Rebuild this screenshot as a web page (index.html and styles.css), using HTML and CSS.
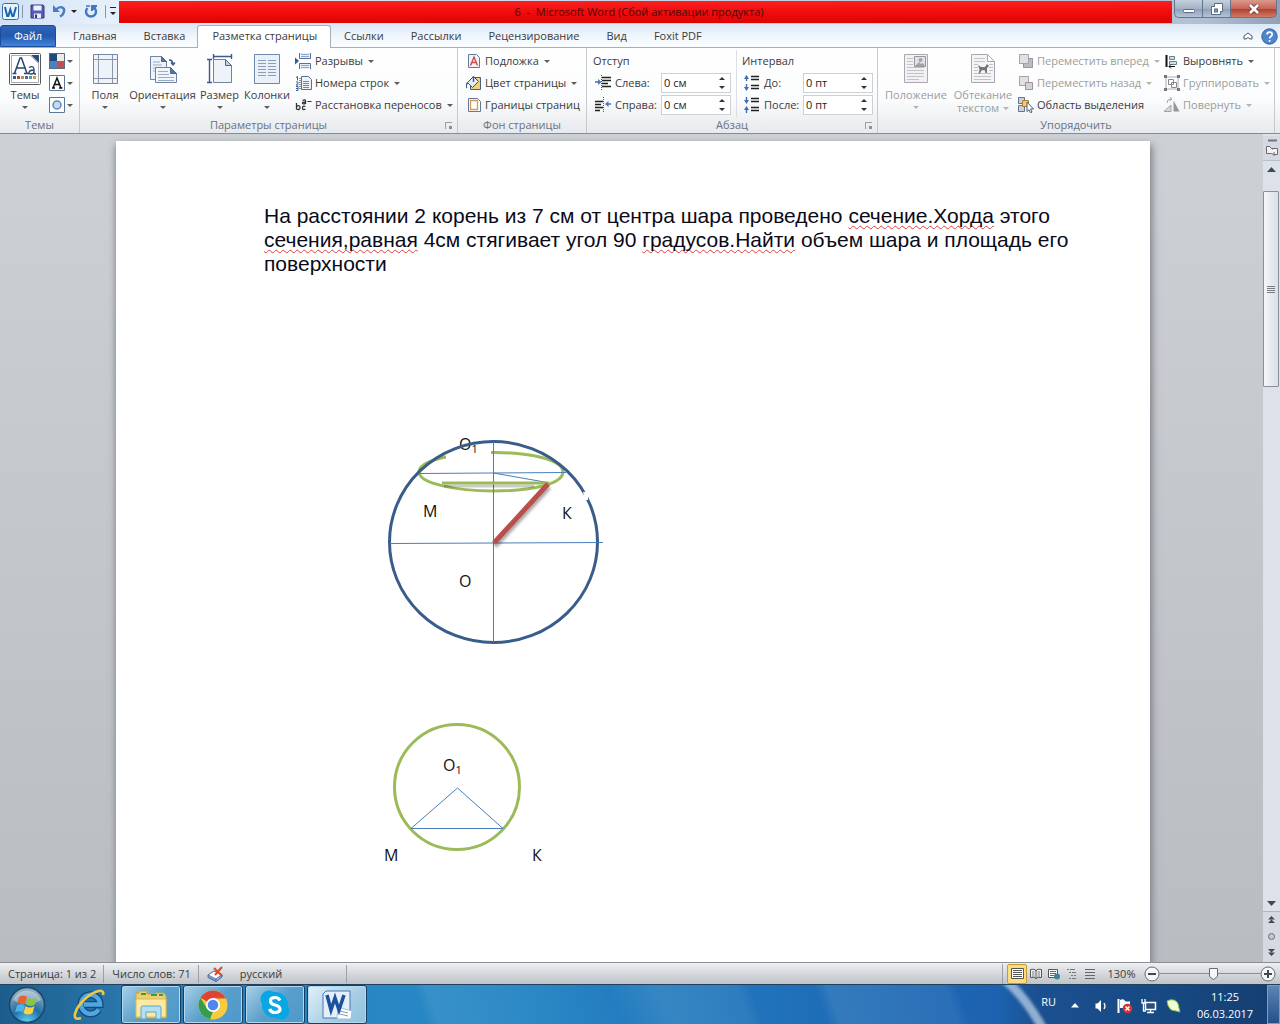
FILE: index.html
```html
<!DOCTYPE html>
<html lang="ru">
<head>
<meta charset="utf-8">
<title>6 - Microsoft Word</title>
<link rel="stylesheet" href="styles.css">
</head>
<body>
<header class="titlebar">
  <div class="quick">
    <svg class="word-mark" width="17" height="17" viewBox="0 0 17 17"><rect x=".5" y=".5" width="16" height="16" rx="2" fill="#e9f3fc" stroke="#3c6ca8"/><path d="M3 4l2.200 9h1.200L8.300 6.500 10.300 13h1.200L14 4" fill="none" stroke="#1f66a8" stroke-width="2"/></svg>
    <span class="sep"></span>
    <button class="plain" aria-label="Сохранить"><svg width="15" height="15" viewBox="0 0 15 15"><path d="M1 1h12l1 1v12H1z" fill="#5a5cb8" stroke="#34347c"/><path d="M3.500 1.500h8v5h-8z" fill="#eef2fb"/><path d="M4 9.500h7v4.500H4z" fill="#e8ecf6"/><path d="M5 10.500h2v3.500H5z" fill="#34347c"/></svg></button>
    <button class="plain undo" aria-label="Отменить"><svg width="14" height="14" viewBox="0 0 14 14"><path d="M3 5.500C7 1.500 12 3 11 7.500 10.500 10 9 11.500 7 12.500" fill="none" stroke="#4a7cc4" stroke-width="2.400"/><path d="M0 1v7h7z" fill="#4a7cc4"/></svg><i class="caret dark"></i></button>
    <button class="plain redo" aria-label="Повторить"><svg width="14" height="14" viewBox="0 0 14 14"><path d="M3.500 4A5 5 0 1 0 10.500 4" fill="none" stroke="#3f78c4" stroke-width="2.400"/><path d="M7 1h6v1.500L8.500 7H7z" fill="#3f78c4"/><path d="M2 2h4" stroke="#3f78c4" stroke-width="1.500"/></svg></button>
    <span class="sep"></span>
    <button class="plain more" aria-label="Настройка панели"><i class="caret dark"></i></button>
  </div>
  <h1 class="title">6&nbsp; -&nbsp; Microsoft Word (Сбой активации продукта)</h1>
  <div class="winbtns">
    <button class="wb" aria-label="Свернуть"><svg width="12" height="12" viewBox="0 0 12 12"><rect x=".5" y="6.500" width="11" height="3" rx="1" fill="#fff" stroke="#5b6a7c"/></svg></button>
    <button class="wb" aria-label="Восстановить"><svg width="12" height="12" viewBox="0 0 12 12"><path d="M3.500.5h8v8h-2v3h-9v-8h3z" fill="#fff" stroke="#5b6a7c"/><rect x="3.500" y="6" width="3" height="3" fill="#8b9cb4" stroke="#5b6a7c"/></svg></button>
    <button class="wb close" aria-label="Закрыть"><svg width="12" height="12" viewBox="0 0 12 12"><path d="M2 2l8 8M10 2l-8 8" stroke="#6b3a3a" stroke-width="4.400"/><path d="M2 2l8 8M10 2l-8 8" stroke="#fff" stroke-width="2.600"/></svg></button>
  </div>
</header>

<nav class="tabs">
  <button class="file">Файл</button>
  <button class="tab">Главная</button>
  <button class="tab">Вставка</button>
  <button class="tab active">Разметка страницы</button>
  <button class="tab">Ссылки</button>
  <button class="tab">Рассылки</button>
  <button class="tab">Рецензирование</button>
  <button class="tab">Вид</button>
  <button class="tab">Foxit PDF</button>
  <div class="tab-end">
    <button class="plain" aria-label="Свернуть ленту"><svg width="10" height="8" viewBox="0 0 10 8"><path d="M1 4l4-3 4 3v3H7L5 5.500 3 7H1z" fill="#fff" stroke="#4a5568"/></svg></button>
    <button class="plain" aria-label="Справка"><svg width="17" height="17" viewBox="0 0 17 17"><circle cx="8.500" cy="8.500" r="7.700" fill="#4d86cf" stroke="#2f5f9f"/><path d="M6 6.500c0-3.300 5.200-3.300 5.200 0 0 1.800-2.600 1.700-2.600 4M8.600 12v1.700" fill="none" stroke="#fff" stroke-width="1.700"/></svg></button>
  </div>
</nav>

<section class="ribbon">
  <div class="group g-themes">
    <div class="tools">
      <button class="big"><svg width="32" height="32" viewBox="0 0 32 32"><rect x=".5" y=".5" width="31" height="31" rx="1" fill="#fff" stroke="#55595e"/><path d="M2.500 2.500h19l8 8v19h-27z" fill="#fff" stroke="#a9adb2"/><path d="M22 2h8v8z" fill="#2b4a7c"/><path d="M5.500 20.500L11 5h1.500L18 20.500M8 15h8M3.500 20.500h4M15 20.500h5" fill="none" stroke="#27456f" stroke-width="1.500"/><path d="M20 14.500c4-2 5 0 5 2v4.500M25 17c-6 0-6 4-3 4 2 0 3-1.500 3-2.500M25 21h2" fill="none" stroke="#27456f" stroke-width="1.300"/><path d="M4 23h3v3H4z" fill="#3d5b8c"/><path d="M8 23h3v3H8z" fill="#b0483f"/><path d="M12 23h3v3h-3z" fill="#94a84e"/><path d="M16 23h3v3h-3z" fill="#6e5b92"/><path d="M20 23h3v3h-3z" fill="#4b9bb0"/><path d="M24 23h3v3h-3z" fill="#dd9348"/></svg><span>Темы</span><i class="caret"></i></button>
      <div class="rows minis">
        <button class="row" aria-label="Цвета"><svg width="16" height="16" viewBox="0 0 16 16"><path d="M0 0h8v8H0z" fill="#1f497d"/><path d="M8 0h8v8H8z" fill="#eeece1"/><path d="M0 8h8v8H0z" fill="#4f81bd"/><path d="M8 8h8v8H8z" fill="#c0504d"/><path d="M.5.5h15v15H.5z" fill="none" stroke="#5a6b82"/></svg><i class="caret"></i></button>
        <button class="row" aria-label="Шрифты"><svg width="16" height="16" viewBox="0 0 16 16"><path d="M.5.5h15v15H.5z" fill="#fff" stroke="#5f7896"/><path d="M4 13L8 3l4 10M5.500 9.500h5M3 13h3M10 13h3.500" fill="none" stroke="#111" stroke-width="1.500"/></svg><i class="caret"></i></button>
        <button class="row" aria-label="Эффекты"><svg width="16" height="16" viewBox="0 0 16 16"><path d="M.5.5h15v15H.5z" fill="#fff" stroke="#5f7896"/><circle cx="8" cy="8" r="4" fill="#c2daf4" stroke="#5a86bb" stroke-width="1.500"/></svg><i class="caret"></i></button>
      </div>
    </div>
    <h2>Темы</h2>
  </div>

  <div class="group g-setup">
    <div class="tools">
      <button class="big"><svg width="32" height="32" viewBox="0 0 32 32"><path d="M4.500 1.500h24v29h-24z" fill="#eef3fa" stroke="#7088aa"/><path d="M9.500 2v28M23.500 2v28M5 6.500h23M5 25.500h23" stroke="#8a96a8"/></svg><span>Поля</span><i class="caret"></i></button>
      <button class="big"><svg width="32" height="32" viewBox="0 0 32 32"><path d="M3.500 3.500h11l5 5v18h-16z" fill="#eef3fa" stroke="#6f83a2"/><path d="M14.500 3.500v5h5z" fill="#56759f" stroke="#4d668c"/><path d="M6 9h7M6 12h9M6 15h9M6 18h9" stroke="#9aabc3"/><path d="M8.500 14.500h15l6 6v9h-21z" fill="#f1f5fb" stroke="#6f83a2"/><path d="M23.500 14.500v6h6z" fill="#56759f" stroke="#4d668c"/><path d="M11 18.500h10M11 21.500h11M11 24.500h16M11 27.500h16" stroke="#9aabc3"/><path d="M22 7c3 0 4 1.500 4 4.500M24 9.500l2 2.500 2-2.500" fill="none" stroke="#3c5a86" stroke-width="1.300"/></svg><span>Ориентация</span><i class="caret"></i></button>
      <button class="big"><svg width="32" height="32" viewBox="0 0 32 32"><path d="M9.500 6.500h12l6 6v17h-18z" fill="#eef3fa" stroke="#6f83a2"/><path d="M21.500 6.500v6h6z" fill="#c2d1e5" stroke="#4d668c"/><path d="M9 3.500h19M9.500 1v5M27.500 1v5M5.500 6v24M3 6.500h5M3 29.500h5" stroke="#3b5a8f" stroke-width="1.400"/></svg><span>Размер</span><i class="caret"></i></button>
      <button class="big"><svg width="32" height="32" viewBox="0 0 32 32"><path d="M3.500 1.500h25v29h-25z" fill="#e9f0f9" stroke="#7088aa"/><path d="M7 7.500h8M7 10.500h8M7 13.500h8M7 16.500h8M7 19.500h8M7 22.500h8M17 7.500h8M17 10.500h8M17 13.500h8M17 16.500h8M17 19.500h8M17 22.500h8" stroke="#8c9fba"/></svg><span>Колонки</span><i class="caret"></i></button>
      <div class="rows">
        <button class="row"><svg width="17" height="16" viewBox="0 0 17 16"><path d="M4.500 0v5.500h11V0M4.500 16v-5.500h11V16" fill="#e9f0f9" stroke="#55719b"/><path d="M6 1.500h8M6 3.500h8M6 12.500h8M6 14.500h8" stroke="#8da6c8"/><path d="M0 4.500v7L4 8z" fill="#2d5b9b"/></svg><span>Разрывы</span><i class="caret"></i></button>
        <button class="row"><svg width="17" height="16" viewBox="0 0 17 16"><path d="M1 2.500l1.500-1v4M1 7h2v1.500L1 10h2.500M1 11.500h2v4H1M1 13.500h2" fill="none" stroke="#3b6299"/><path d="M6.500 1.500h7l3 3v10h-10z" fill="#eef3fa" stroke="#55719b"/><path d="M8 6.500h6M8 8.500h6M8 10.500h6M8 12.500h6" stroke="#6f87ab"/><path d="M5 3v11" stroke="#222" stroke-dasharray="1 1"/></svg><span>Номера строк</span><i class="caret"></i></button>
        <button class="row"><svg width="17" height="16" viewBox="0 0 17 16"><path d="M1.500 6v6.500M1.500 9.500q3.500-2 3.500 1t-3.500 1.500M10.500 9.500q-3-1-3 1.500t3 1M7.500 3.500q3-1.500 3 .5v3M10.500 5q-3.500 0-3 1.300t3 0" fill="none" stroke="#333" stroke-width="1.300"/><path d="M12.500 4.500h4" stroke="#333"/></svg><span>Расстановка переносов</span><i class="caret"></i></button>
      </div>
    </div>
    <h2>Параметры страницы</h2>
    <button class="launch" aria-label="Параметры страницы: подробно"></button>
  </div>

  <div class="group g-back">
    <div class="tools">
      <div class="rows">
        <button class="row"><svg width="16" height="16" viewBox="0 0 16 16"><path d="M2.500 1.500h8l3 3v10h-11z" fill="#eef3fa" stroke="#64789a"/><path d="M4.500 12.500L8 4l3.500 8.500M6 9.500h4" fill="none" stroke="#d04a4a" stroke-width="1.400"/></svg><span>Подложка</span><i class="caret"></i></button>
        <button class="row"><svg width="16" height="16" viewBox="0 0 16 16"><path d="M7.500 2.500h7v12h-10v-4" fill="#ecd07c" stroke="#4a5f80"/><path d="M1.500 7.500l6-6 5 5-6 6z" fill="#e3eaf4" stroke="#3b4f70"/><path d="M7.500 1v6M2 8C0 8 0 12 .8 13" fill="none" stroke="#3b5f96" stroke-width="1.400"/></svg><span>Цвет страницы</span><i class="caret"></i></button>
        <button class="row"><svg width="16" height="16" viewBox="0 0 16 16"><path d="M2.500 1.500h9l3 3v10h-12z" fill="#fff" stroke="#64789a"/><path d="M4.500 3.500h7v9h-7z" fill="#fff" stroke="#d79a5a" stroke-width="1.300"/></svg><span>Границы страниц</span></button>
      </div>
    </div>
    <h2>Фон страницы</h2>
  </div>

  <div class="group g-para">
    <div class="tools">
      <div class="fields indent">
        <h3>Отступ</h3>
        <label for="left"><svg width="16" height="16" viewBox="0 0 16 16"><path d="M7 2.500h9M7 5.500h9M7 8.500h6M7 11.500h9" stroke="#222" stroke-width="1.600"/><path d="M0 7h5" stroke="#4a7ab8" stroke-width="1.600"/><path d="M3 4l3.500 3L3 10z" fill="#4a7ab8"/><path d="M6.500 0v16" stroke="#555" stroke-dasharray="1 1"/></svg>Слева:</label>
        <div class="spin"><input id="left" value="0 см"><i></i></div>
        <label for="right"><svg width="16" height="16" viewBox="0 0 16 16"><path d="M0 4.500h8M0 7.500h6M0 10.500h8M0 13.500h5" stroke="#222" stroke-width="1.600"/><path d="M12 7h4" stroke="#4a7ab8" stroke-width="1.600"/><path d="M13.500 4L10 7l3.500 3z" fill="#4a7ab8"/><path d="M8.500 0v16" stroke="#555" stroke-dasharray="1 1"/></svg>Справа:</label>
        <div class="spin"><input id="right" value="0 см"><i></i></div>
      </div>
      <div class="fields spacing">
        <h3>Интервал</h3>
        <label for="before"><svg width="16" height="16" viewBox="0 0 16 16"><path d="M7 1.500h8M7 4.500h8M7 10.500h8M7 13.500h8" stroke="#222" stroke-width="1.400"/><path d="M2.500 1v5M2.500 9v5" stroke="#3f6fae" stroke-width="1.400"/><path d="M0 4l2.500-4L5 4zM0 12h5l-2.500 4z" fill="#3f6fae"/></svg>До:</label>
        <div class="spin"><input id="before" value="0 пт"><i></i></div>
        <label for="after"><svg width="16" height="16" viewBox="0 0 16 16"><path d="M7 1.500h8M7 4.500h8M7 10.500h8M7 13.500h8" stroke="#222" stroke-width="1.400"/><path d="M2.500 0v5M2.500 11v5" stroke="#3f6fae" stroke-width="1.400"/><path d="M0 3h5L2.500 7zM0 13l2.500-4L5 13z" fill="#3f6fae"/></svg>После:</label>
        <div class="spin"><input id="after" value="0 пт"><i></i></div>
      </div>
    </div>
    <h2>Абзац</h2>
    <button class="launch" aria-label="Абзац: подробно"></button>
  </div>

  <div class="group g-arrange">
    <div class="tools">
      <button class="big" disabled><svg width="32" height="32" viewBox="0 0 32 32"><path d="M4.500 1.500h23v28h-23z" fill="#f1f0f3" stroke="#aaa8ae"/><path d="M7 5.500h6M7 8.500h6M7 11.500h6M7 14.500h17M7 17.500h17M7 20.500h17M7 23.500h17M7 26.500h12" stroke="#c4c2c8"/><path d="M14.500 3.500h11v10h-11z" fill="#e3e2e6" stroke="#98969c"/><circle cx="20.500" cy="7" r="2" fill="#a5a3a9"/><path d="M15 13l4-4 2 2 2-1 2 3z" fill="#a5a3a9"/></svg><span>Положение</span><i class="caret"></i></button>
      <button class="big" disabled><svg width="32" height="32" viewBox="0 0 32 32"><path d="M4.500 1.500h16l7 7v21h-23z" fill="#f4f3f5" stroke="#aaa8ae"/><path d="M20.500 1.500v7h7z" fill="#fff" stroke="#aaa8ae"/><path d="M7 5.500h11M7 8.500h11M7 11.500h4M22 11.500h4M7 14.500h4M22 14.500h4M7 17.500h4M22 17.500h4M7 20.500h17M7 23.500h17M7 26.500h17" stroke="#c4c2c8"/><path d="M11 12l3 2h4l2-3 2 2-2 2v5h-1.500l-1-3-3 .5-1.500 3h-1.500l1-4z" fill="#77757b"/></svg><span>Обтекание<br>текстом <i class="caret"></i></span></button>
      <div class="rows order">
        <button class="row" disabled><svg width="16" height="16" viewBox="0 0 16 16"><path d="M5.500 5.500h9v9h-9z" fill="#bdbbc1" stroke="#97959b"/><path d="M1.500 1.500h9v9h-9z" fill="#e1e0e4" stroke="#a5a3a9"/></svg><span>Переместить вперед</span><i class="caret"></i></button>
        <button class="row" disabled><svg width="16" height="16" viewBox="0 0 16 16"><path d="M1.500 1.500h9v9h-9z" fill="#e1e0e4" stroke="#a5a3a9"/><path d="M7.500 7.500h7v7h-7z" fill="#d3d2d7" stroke="#97959b"/></svg><span>Переместить назад</span><i class="caret"></i></button>
        <button class="row"><svg width="16" height="16" viewBox="0 0 16 16"><path d="M.5.5h6v6h-6zM.5 8.500h6v6h-6z" fill="#c8d2e0" stroke="#66758c"/><path d="M4.500 3.500h6v6h-6z" fill="#f0c878" stroke="#a98135"/><path d="M9 5l6.500 7h-3l1.500 3-1.500.8-1.500-3L9 14.500z" fill="#fff" stroke="#4a5f80"/></svg><span>Область выделения</span></button>
      </div>
      <div class="rows">
        <button class="row"><svg width="16" height="16" viewBox="0 0 16 16"><path d="M2.500 2v12" stroke="#111" stroke-width="2"/><path d="M5.500 3.500h5v3h-5zM5.500 8.500h7v3h-7z" fill="#cfe0e6" stroke="#63848e"/><path d="M5 13.500h6M7 11.500l-2 2 2 2" fill="none" stroke="#111"/></svg><span>Выровнять</span><i class="caret"></i></button>
        <button class="row" disabled><svg width="16" height="16" viewBox="0 0 16 16"><path d="M2 2h12v12H2z" fill="none" stroke="#b0aeb4"/><path d="M4.500 4.500h5v5h-5zM7.500 7.500h5v5h-5z" fill="none" stroke="#8a888e"/><path d="M0 0h3v3H0zM13 0h3v3h-3zM0 13h3v3H0zM13 13h3v3h-3z" fill="#77757b"/></svg><span>Группировать</span><i class="caret"></i></button>
        <button class="row" disabled><svg width="16" height="16" viewBox="0 0 16 16"><path d="M0 14.500L7 8v6.500z" fill="#d8d7db" stroke="#a5a3a9"/><path d="M9.500 3.500v11h6z" fill="#98969c"/><path d="M3 6q0-4 4-4M5.500 0L8 2 5.500 4" fill="none" stroke="#a5a3a9"/></svg><span>Повернуть</span><i class="caret"></i></button>
      </div>
    </div>
    <h2>Упорядочить</h2>
  </div>
</section>

<div class="work">
  <main class="desk">
    <article class="page">
      <p>На расстоянии 2 корень из 7 см от центра шара проведено <u>сечение.Хорда</u> этого<br><u>сечения,равная</u> 4см стягивает угол 90 <u>градусов.Найти</u> объем шара и площадь его<br>поверхности</p>
      <svg class="sphere" width="240" height="230" viewBox="380 425 240 230">
        <defs><filter id="soft" x="-20%" y="-50%" width="140%" height="240%"><feDropShadow dx="1" dy="3" stdDeviation="1.500" flood-color="#000" flood-opacity=".35"/></filter></defs>
        <text x="459" y="450">О<tspan class="sub" dy="3">1</tspan></text>
        <text x="423" y="517">М</text>
        <text x="562" y="519">К</text>
        <text x="459" y="587">О</text>
        <path d="M491 452.500C530 452 563 460 563 472c0 12-32 19-70 19s-74-8-74-19c0-6 10-12 27-15" fill="none" stroke="#9bbb59" stroke-width="3"/>
        <ellipse cx="493.500" cy="542" rx="104" ry="100.500" fill="none" stroke="#385d8a" stroke-width="3"/>
        <path d="M583 492h5v8h-3z" fill="#fff"/>
        <path d="M493.500 442v200M390 543.500l213-1M419 473.500l147-1M493.500 473l54 9.500" stroke="#4a7ebb" fill="none"/>
        <path d="M444 486h90" stroke="#000" stroke-opacity=".2" stroke-width="3"/>
        <path d="M442 483h107" stroke="#9bbb59" stroke-width="3"/>
        <path d="M494 543l54-59" stroke="#b9504d" stroke-width="5" filter="url(#soft)"/>
      </svg>
      <svg class="section" width="170" height="150" viewBox="380 720 170 150">
        <circle cx="457" cy="787" r="62.500" fill="none" stroke="#9bbb59" stroke-width="3"/>
        <path d="M457.500 788L411 828.500h92z" fill="none" stroke="#4a7ebb"/>
        <text x="443" y="771">О<tspan class="sub" dy="3">1</tspan></text>
        <text x="384" y="861">М</text>
        <text x="532" y="861">К</text>
      </svg>
    </article>
  </main>
  <aside class="scroll">
    <button class="ruler" aria-label="Линейка"><svg width="14" height="20" viewBox="0 0 14 20"><path d="M3 2.500h9" stroke="#70757f" stroke-width="2"/><path d="M1.500 8.500h3l2 2h6v6h-4l-2-1h-5z" fill="#f4f3f3" stroke="#6c6a70"/><path d="M4 8l4 4M9 14v4" stroke="#6c6a70" stroke-dasharray="2 1"/></svg></button>
    <button class="arrow" aria-label="Вверх"><svg width="9" height="5" viewBox="0 0 9 5"><path d="M0 5l4.500-5L9 5z" fill="#44484f"/></svg></button>
    <div class="track"><div class="thumb"></div></div>
    <button class="arrow" aria-label="Вниз"><svg width="9" height="5" viewBox="0 0 9 5"><path d="M0 0h9L4.500 5z" fill="#44484f"/></svg></button>
    <div class="browse">
      <button class="plain" aria-label="Предыдущая страница"><svg width="7" height="7" viewBox="0 0 7 7"><path d="M0 3.500L3.500 0 7 3.500zM0 7l3.500-3.500L7 7z" fill="#44484f"/></svg></button>
      <button class="plain" aria-label="Объект перехода"><svg width="7" height="7" viewBox="0 0 7 7"><circle cx="3.500" cy="3.500" r="3" fill="#c4c8ce" stroke="#666b73"/></svg></button>
      <button class="plain" aria-label="Следующая страница"><svg width="7" height="7" viewBox="0 0 7 7"><path d="M0 0h7L3.500 3.500zM0 3.500h7L3.500 7z" fill="#44484f"/></svg></button>
    </div>
  </aside>
</div>

<footer class="status">
  <span class="cell">Страница: 1 из 2</span>
  <span class="cell">Число слов: 71</span>
  <span class="cell lang"><svg width="17" height="16" viewBox="0 0 17 16"><path d="M1 9l6-4 8 3.500-6 4.500z" fill="#fff" stroke="#4868a8"/><path d="M1 9v2.500l8 4V13M9 15.500l6-4.500V8.500" fill="#7d9cd6" stroke="#4868a8"/><path d="M7 2l8 8M15 1L8 9" stroke="#dc4a2c" stroke-width="2"/></svg>русский</span>
  <div class="views">
    <button class="view on" aria-label="Разметка страницы"><svg width="13" height="13" viewBox="0 0 13 13"><path d="M.5 1.500h12v10H.5z" fill="#fff" stroke="#555"/><path d="M2 3.500h9M2 5.500h9M2 7.500h9M2 9.500h9" stroke="#555"/></svg></button>
    <button class="view" aria-label="Режим чтения"><svg width="12" height="12" viewBox="0 0 12 12"><path d="M.5 1.500q4-1 5.500 1 1.500-2 5.500-1v8q-4-1-5.500 1-1.500-2-5.500-1zM6 2v9" fill="#f3f3f3" stroke="#555"/><path d="M2 4h2.500M2 6h2.500M2 8h2.500M7.500 4H10M7.500 6H10M7.500 8H10" stroke="#777"/></svg></button>
    <button class="view" aria-label="Веб-документ"><svg width="12" height="12" viewBox="0 0 12 12"><path d="M.5 1.500h9v8h-9z" fill="#fff" stroke="#555"/><path d="M2 3.500h6M2 5.500h6M2 7.500h4" stroke="#666"/><circle cx="9" cy="8.500" r="3" fill="#39849a"/></svg></button>
    <button class="view" aria-label="Структура"><svg width="12" height="12" viewBox="0 0 12 12"><path d="M1 1.500h8M3 4.500h7M5 7.500h5M3 10.500h7" stroke="#777" stroke-dasharray="2 1 6 0"/></svg></button>
    <button class="view" aria-label="Черновик"><svg width="12" height="12" viewBox="0 0 12 12"><path d="M1 1.500h10M1 4.500h10M1 7.500h10M1 10.500h10" stroke="#666"/></svg></button>
  </div>
  <label class="percent" for="zoom">130%</label>
  <button class="plain" aria-label="Уменьшить"><svg width="16" height="16" viewBox="0 0 16 16"><circle cx="8" cy="8" r="7" fill="#f5f6f7" stroke="#66696e"/><path d="M4 8h8" stroke="#44474c" stroke-width="2"/></svg></button>
  <input class="zoom" id="zoom" type="range" min="0" max="100" value="54">
  <button class="plain" aria-label="Увеличить"><svg width="16" height="16" viewBox="0 0 16 16"><circle cx="8" cy="8" r="7" fill="#f5f6f7" stroke="#66696e"/><path d="M4 8h8M8 4v8" stroke="#44474c" stroke-width="2"/></svg></button>
</footer>

<div class="taskbar">
  <button class="plain start" aria-label="Пуск"><svg width="38" height="38" viewBox="0 0 38 38"><defs><radialGradient id="orb" cx=".5" cy="1" r=".9"><stop offset="0" stop-color="#5fd6f5"/><stop offset=".5" stop-color="#1e6fa8"/><stop offset="1" stop-color="#8fa9bd"/></radialGradient></defs><circle cx="19" cy="19" r="17.500" fill="url(#orb)" stroke="#1d466b" stroke-width="1.500"/><path d="M5 14a15 15 0 0 1 28 0q-14 8-28 0z" fill="#fff" opacity=".35"/><path d="M11 11q4-3 8 0l-2 7q-4-2.500-8 0z" fill="#e8622c"/><path d="M20 11.500q4 3 9 0l-2 7q-4.500 3-9 0z" fill="#8cc63f"/><path d="M9 19.500q4-3 8 0l-2 7q-4-2.500-8 0z" fill="#4fb3ea"/><path d="M17.500 20q4.500 3 9 0l-2 7q-4.500 3-9 0z" fill="#fbd042"/></svg></button>
  <button class="plain ie" aria-label="Internet Explorer"><svg width="34" height="34" viewBox="0 0 34 34"><path d="M26.500 21.500a9.500 9.500 0 1 1 1.500-5H12" fill="none" stroke="#14477c" stroke-width="7"/><path d="M26.500 21.500a9.500 9.500 0 1 1 1.500-5H12" fill="none" stroke="#4fa6e0" stroke-width="4.500"/><path d="M9 30C-2 34 3 20 13 11S33 0 31 7" fill="none" stroke="#efc83e" stroke-width="2.600"/></svg></button>
  <button class="app" aria-label="Проводник"><svg width="34" height="32" viewBox="0 0 34 32"><path d="M2 8V4h3V2h8v3h8V4h9l2 3v22H2z" fill="#ecd06e" stroke="#c6a23f"/><path d="M7 5h5M17 6h6M25 6h4" stroke="#3c9a4c" stroke-width="2"/><path d="M2 10h30v18H2z" fill="#fbeaa0" stroke="#d9bb5d"/><path d="M7 30V19q0-2 2-2h16q2 0 2 2v11h-5v-7H12v7z" fill="#b5e0f4" stroke="#5ba5cb"/></svg></button>
  <button class="app" aria-label="Google Chrome"><svg width="30" height="30" viewBox="0 0 30 30"><circle cx="15" cy="15" r="14.500" fill="#f7cb3d"/><path d="M15 15L2.500 7.700A14.500 14.500 0 0 1 27.500 7.700H15z" fill="#dc4437"/><path d="M2.500 7.700L9 18.500l6 3-3 7.700A14.500 14.500 0 0 1 2.500 7.700z" fill="#30a04f"/><path d="M15 8h12.700" stroke="#dc4437"/><circle cx="15" cy="15" r="7" fill="#fff"/><circle cx="15" cy="15" r="5.300" fill="#4c86ee"/></svg></button>
  <button class="app" aria-label="Skype"><svg width="30" height="30" viewBox="0 0 30 30"><circle cx="9" cy="9" r="8.500" fill="#08a7e4"/><circle cx="21" cy="21" r="8.500" fill="#08a7e4"/><circle cx="15" cy="15" r="13" fill="#08a7e4"/><path d="M20 10.500q-1.500-3-5-3-4.500 0-4.500 3.500 0 3 4.500 4t5 4-5 3.500q-4 0-5.500-3.500" fill="none" stroke="#fff" stroke-width="3.200"/></svg></button>
  <button class="app current" aria-label="Microsoft Word"><svg width="30" height="30" viewBox="0 0 30 30"><path d="M4 1h24v27H1V4z" fill="#e4effa" stroke="#4579b8"/><path d="M16 17l14 4-1 8H15z" fill="#fff" stroke="#a9bdd4"/><path d="M18 21l8 2M18 24l8 2" stroke="#7d9bc0"/><path d="M5 5l4 15 4-12 4 12 5-15" fill="none" stroke="#1e50a0" stroke-width="3.500"/></svg></button>
  <div class="tray">
    <span class="ru">RU</span>
    <button class="plain" aria-label="Показать скрытые значки"><svg width="16" height="16" viewBox="0 0 16 16"><path d="M4 10.500L8 6l4 4.500z" fill="#fff"/></svg></button>
    <button class="plain" aria-label="Громкость"><svg width="16" height="16" viewBox="0 0 16 16"><path d="M2.500 5.500h2L8 2v12l-3.500-3.500h-2z" fill="#fff"/><path d="M11 5q2 3 0 6" fill="none" stroke="#fff" stroke-width="1.300"/></svg></button>
    <button class="plain" aria-label="Центр поддержки"><svg width="16" height="16" viewBox="0 0 16 16"><path d="M1.500 1v14" stroke="#fff" stroke-width="2"/><path d="M3 2q4-2 5 1 3 1 5 0v7H3z" fill="#fff"/><circle cx="10.500" cy="10.500" r="4.800" fill="#d62f2f"/><path d="M8.500 8.500l4 4M12.500 8.500l-4 4" stroke="#fff" stroke-width="1.500"/></svg></button>
    <button class="plain" aria-label="Сеть"><svg width="16" height="16" viewBox="0 0 16 16"><path d="M4.500 4.500h10v7h-10z" fill="#2c4f7c" stroke="#fff" stroke-width="1.500"/><path d="M6 14.500h7M9.500 12v2M1 1v4h3V1M2.500 5v8H5" fill="none" stroke="#fff" stroke-width="1.300"/></svg></button>
    <button class="plain" aria-label="Фоновое приложение"><svg width="16" height="16" viewBox="0 0 16 16"><path d="M2 3q6-3 10 1 2 3 2 6l1 4-4-1Q3 13 2 3z" fill="#f3fbd8" stroke="#7cc242"/></svg></button>
    <time class="clock">11:25<br>06.03.2017</time>
    <button class="desktop" aria-label="Свернуть все окна"></button>
  </div>
</div>
</body>
</html>
```
FILE: styles.css
```css
*, ::before, ::after { box-sizing: border-box; }

body {
  margin: 0;
  min-height: 100vh;
  display: flex;
  flex-direction: column;
  font: 11px/16px "Open Sans", "Noto Sans", sans-serif;
  color: #3b3b3b;
  background: #c5c8cc;
  white-space: nowrap;
}

button {
  font: inherit;
  color: inherit;
  padding: 0;
  border: 0;
  background: none;
}

h1, h2, h3, p { margin: 0; font: inherit; }
svg { display: block; flex: none; }
.plain { display: flex; align-items: center; }

.caret {
  flex: none;
  display: inline-block;
  border: 3px solid transparent;
  border-top-color: #5c5c5c;
  border-bottom: 0;
}
.caret.dark { border-top-color: #222; }
:disabled { color: #9c9c9c; }
:disabled .caret { border-top-color: #b4b4b4; }

/* title bar */
.titlebar {
  display: flex;
  height: 24px;
  background: linear-gradient(90deg, #cfe0f5, #e6f0fb 8%, #c9d3e6 50%, #b3bfd2 94%, #8fa0b8);
}
.quick {
  display: flex;
  align-items: center;
  width: 119px;
  padding: 0 2px 2px;
}
.sep { width: 1px; height: 13px; margin: 0 7px 0 3px; background: #8b95a5; }
.undo { gap: 4px; margin-left: 8px; }
.redo { margin: 0 4px 0 7px; }
.quick .more { padding-top: 4px; margin-left: -3px; border-top: 1px solid #222; }
.title {
  flex: 1;
  margin: 1px 0;
  padding-right: 13px;
  text-align: center;
  line-height: 22px;
  color: #4d0808;
  background: linear-gradient(#fb2020, #f20c0c 50%, #dd0404);
}
.winbtns { display: flex; width: 108px; padding: 0 3px 6px 2px; }
.wb {
  display: grid;
  place-items: center;
  width: 28px;
  border: 1px solid #66758b;
  border-top: 0;
  border-right: 0;
  background: linear-gradient(#c5d0de, #a3b2c6 50%, #8c9eb7 51%, #b4c4d8);
}
.wb:first-child { border-radius: 0 0 0 5px; }
.wb.close {
  flex: 1;
  border-right: 1px solid #66758b;
  border-radius: 0 0 5px 0;
  background: linear-gradient(#d99a8c, #c8665a 50%, #b03c2e 51%, #cf7a64);
}

/* ribbon tabs */
.tabs {
  display: flex;
  height: 24px;
  padding-top: 1px;
  border-bottom: 1px solid #a9aeb5;
  background: linear-gradient(#dbe7f5, #eef5fc 50%, #fafdff);
}
.file {
  width: 56px;
  margin-right: 3px;
  border: 1px solid #1d4a9a;
  border-radius: 3px 3px 0 0;
  color: #fff;
  background: linear-gradient(#2f66b8, #2358ae 50%, #3f86dc);
}
.tab { padding: 0 13px 0 14px; }
.tab.active {
  margin: 0 -1px -1px;
  padding-bottom: 2px;
  border: 1px solid #a9aeb5;
  border-bottom: 0;
  border-radius: 3px 3px 0 0;
  background: #fff;
}
.tab-end { display: flex; gap: 8px; margin-left: auto; padding-right: 2px; }

/* ribbon */
.ribbon {
  display: flex;
  height: 86px;
  border-bottom: 1px solid #868c96;
  background: linear-gradient(#fff, #fbfcfd 60%, #e6e9ed);
}
.group {
  position: relative;
  display: flex;
  flex-direction: column;
  padding-top: 2px;
  border-right: 1px solid #c6cad0;
}
.group h2 { text-align: center; color: #6a7280; }
.tools { display: flex; height: 67px; }
.g-themes { width: 80px; }
.g-setup { width: 378px; }
.g-back { width: 129px; }
.g-para { width: 291px; }
.g-arrange { width: 397px; }
.launch {
  position: absolute;
  right: 5px;
  bottom: 4px;
  width: 7px;
  height: 7px;
  border: 1px solid #9aa0a8;
  border-width: 1px 0 0 1px;
  background: linear-gradient(#8b9199, #8b9199) 100% 100% / 3px 3px no-repeat;
}
.big {
  flex: none;
  display: flex;
  flex-direction: column;
  align-items: center;
  padding-top: 3px;
}
.big > span { line-height: 13px; padding-top: 3px; }
.big > .caret { margin-top: 5px; }
.big > span .caret { margin: 0 0 2px 1px; }
.rows { flex: none; display: flex; flex-direction: column; }
.row { display: flex; align-items: center; gap: 3px; height: 22px; }
.row .caret { margin-left: 2px; }
.g-themes .big { width: 44px; margin-left: 3px; }
.minis { margin-left: 2px; }
.minis .row { gap: 0; }
.g-setup .tools { padding-left: 2px; }
.g-setup .big:nth-child(1) { width: 46px; }
.g-setup .big:nth-child(2) { width: 69px; }
.g-setup .big:nth-child(3) { width: 45px; }
.g-setup .big:nth-child(4) { width: 50px; }
.g-setup .rows { margin-left: 3px; }
.g-back .tools { padding-left: 8px; }
.g-arrange .big:nth-child(1) { width: 76px; }
.g-arrange .big:nth-child(2) { width: 58px; }
.g-arrange .rows { margin-left: 6px; }
.g-arrange .order { width: 140px; }

.fields {
  display: grid;
  grid-template-rows: 22px 22px 22px;
  align-items: center;
}
.fields h3 { grid-column: 1 / 3; }
.fields label { display: flex; align-items: center; gap: 4px; padding-left: 2px; }
.indent { grid-template-columns: 68px 70px; margin-left: 6px; }
.spacing {
  grid-template-columns: 61px 70px;
  margin-left: 5px;
  padding-left: 5px;
  border-left: 1px solid #dcdfe3;
}
.spin {
  display: flex;
  align-items: center;
  height: 20px;
  border: 1px solid #cdd0d5;
  background: #fff;
}
.spin input {
  flex: 1;
  width: 0;
  padding: 0 2px;
  border: 0;
  font: inherit;
  color: #222;
  background: none;
}
.spin i {
  display: flex;
  flex-direction: column;
  justify-content: space-between;
  height: 12px;
  margin-right: 5px;
}
.spin i::before, .spin i::after { content: ""; border: 3px solid transparent; }
.spin i::before { border-top: 0; border-bottom-color: #333; }
.spin i::after { border-bottom: 0; border-top-color: #333; }

/* document area */
.work { flex: 1; display: flex; background: linear-gradient(#cdd0d5, #b9bcc1); }
.desk {
  flex: 1;
  display: flex;
  justify-content: center;
  padding: 7px 0 0 3px;
  overflow: hidden;
}
.page {
  width: 100%;
  max-width: 1034px;
  padding: 63px 80px 40px 148px;
  background: #fff;
  box-shadow: 2px 4px 8px #7d8288, -1px 4px 6px #a0a4aa;
  font: 21px/24px "Liberation Sans", Arial, sans-serif;
  color: #0a0a18;
}
.page u {
  text-decoration: underline wavy #d84040 1px;
  text-underline-offset: 2px;
  text-decoration-skip-ink: none;
}
.page text { font: 16px "Open Sans", sans-serif; fill: #111; }
.page .sub { font-size: 11px; }
.sphere { margin: 149px 0 0 116px; }
.section { margin: 65px 0 0 116px; }

.scroll {
  display: flex;
  flex-direction: column;
  width: 17px;
  padding-top: 2px;
  background: #dde2ea;
}
.ruler { display: grid; place-items: center; height: 25px; border-bottom: 1px solid #b8bec8; background: #d5dae2; }
.arrow { display: grid; place-items: center; height: 16px; }
.track { flex: 1; padding-top: 14px; }
.thumb {
  height: 196px;
  margin-right: 1px;
  border: 1px solid #8a8f99;
  border-radius: 1px;
  background:
    repeating-linear-gradient(#777c85 0 1px, transparent 1px 2px) center / 8px 7px no-repeat,
    linear-gradient(90deg, #f4f6f9, #d9dee7);
}
.browse {
  display: flex;
  flex-direction: column;
  align-items: center;
  justify-content: space-between;
  height: 51px;
  padding: 4px 0 6px;
  border-top: 1px solid #b0b7c2;
  background: #d5dae2;
}

/* status bar */
.status {
  display: flex;
  align-items: center;
  height: 22px;
  padding-right: 4px;
  border-top: 1px solid #8a8f96;
  background: linear-gradient(#eef0f2, #d5d8dc 50%, #c0c4c9);
}
.cell {
  display: flex;
  align-items: center;
  gap: 16px;
  height: 18px;
  padding: 0 7px 0 8px;
  border-right: 1px solid #9ba0a8;
}
.cell.lang { width: 148px; }
.views {
  display: flex;
  height: 20px;
  margin-left: auto;
  padding-left: 4px;
  border-left: 1px solid #9ba0a8;
}
.view { display: grid; place-items: center; width: 18px; }
.view.on { width: 20px; border: 1px solid #c79a2e; border-radius: 2px; background: #fbdc84; }
.percent { width: 45px; text-align: center; }
.zoom {
  width: 100px;
  height: 16px;
  margin: 0;
  appearance: none;
  background: linear-gradient(#8b9097, #8b9097) center / 100% 1px no-repeat;
}
.zoom::-webkit-slider-thumb {
  appearance: none;
  width: 9px;
  height: 12px;
  background: url("data:image/svg+xml,%3Csvg xmlns='http://www.w3.org/2000/svg' width='9' height='12'%3E%3Cpath d='M.5.5h8v8l-4 3-4-3z' fill='%23f5f6f7' stroke='%2366696e'/%3E%3C/svg%3E");
}

/* taskbar */
.taskbar {
  display: flex;
  align-items: center;
  height: 40px;
  color: #fff;
  border-top: 1px solid #21415f;
  background:
    url("data:image/svg+xml,%3Csvg xmlns='http://www.w3.org/2000/svg' width='80' height='39'%3E%3Cfilter id='b'%3E%3CfeGaussianBlur stdDeviation='1.500'/%3E%3C/filter%3E%3Cpath d='M14-6Q36 12 54 46' fill='none' stroke='%23cfe0f0' stroke-opacity='.65' stroke-width='9' filter='url(%23b)'/%3E%3C/svg%3E") right 210px top 0 / 80px 39px no-repeat,
    linear-gradient(70deg, transparent 33%, #ffffff14 34%, transparent 48%, #ffffff18 52%, #ffffff10 58%, transparent 59%, transparent 64%, #ffffff18 65%, #ffffff10 74%, transparent 75%),
    linear-gradient(90deg, #1c5d8c, #2a78ad 10%, #2888c4 30%, #2585c4 40%, #1f70b8 62%, #1c62b0 78%, #1b5090 81%, #174a84 90%, #153e72);
}
.start { margin: 0 26px 0 8px; }
.ie { margin-right: 15px; }
.app {
  display: grid;
  place-items: center;
  width: 60px;
  height: 39px;
  margin-right: 2px;
  border: 1px solid #163f66;
  border-radius: 3px;
  background: linear-gradient(135deg, #a9d0e6, #5a9fcb 50%, #4d98ca);
  box-shadow: inset 0 0 0 1px #b4d8ee;
}
.app.current { background: linear-gradient(135deg, #e3f1f8, #a5cde4 60%, #8fc1de); }
.tray { display: flex; align-items: center; gap: 8px; height: 39px; margin-left: auto; }
.ru { padding-bottom: 5px; margin-right: 3px; }
.tray .ru + .plain { margin: 0 2px 0 0; }
.tray .plain { margin-top: 2px; }
.clock { width: 70px; padding-left: 2px; text-align: center; line-height: 17px; }
.desktop {
  align-self: stretch;
  width: 13px;
  border: 1px solid #7b9dc2;
  background: linear-gradient(#5d86b4, #24508a);
}
```
